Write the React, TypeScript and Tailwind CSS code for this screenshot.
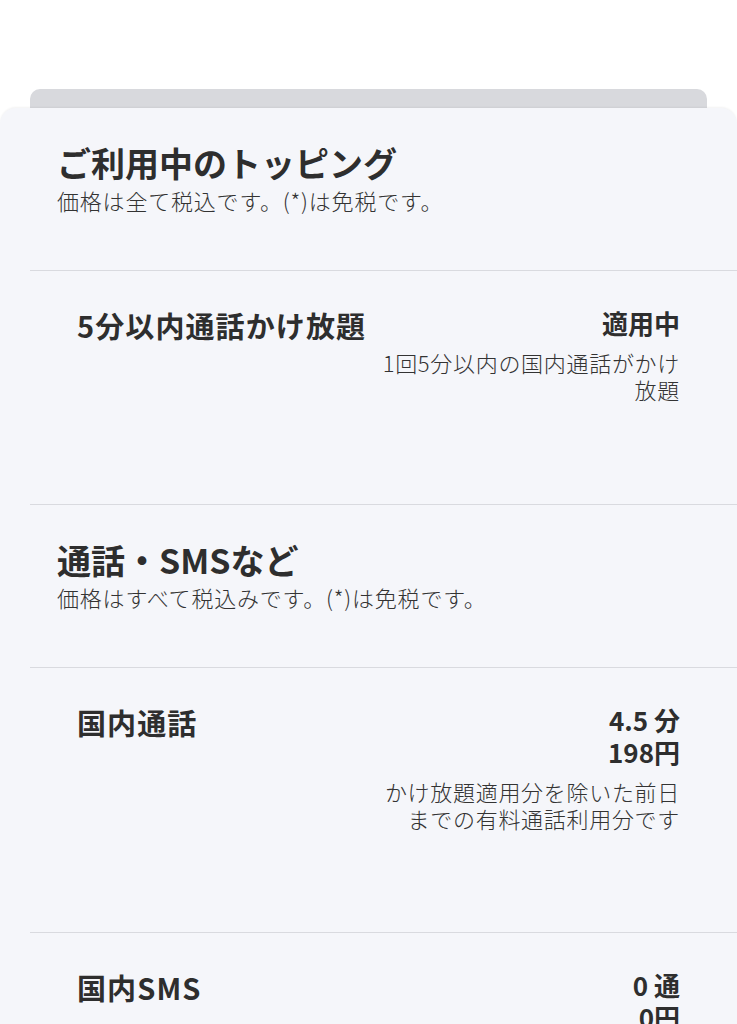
import React from "react";

const font = { fontFamily: '"Noto Sans CJK JP", "Noto Sans", sans-serif' };

function SectionHeader({ title, sub }: { title: string; sub: string }) {
  return (
    <div className="pl-[57px] pr-[57px] pt-[35px] pb-[56px]">
      <div className="text-[34px] leading-[40px] font-bold text-[#2e2e2e]">{title}</div>
      <div className="text-[22px] leading-[28px] font-light text-[#333] mt-[3px] whitespace-nowrap tracking-[0.8px]">{sub}</div>
    </div>
  );
}

function Divider() {
  return <div className="ml-[30px] h-px bg-[#d9dadf]" />;
}

function Row({ label, values, desc, pb }: { label: string; values: string[]; desc?: string[]; pb: string }) {
  return (
    <div className={`flex justify-between pl-[77px] pr-[57px] pt-[36px] ${pb}`}>
      <div className="text-[29px] leading-[36px] font-bold text-[#2e2e2e] whitespace-nowrap tracking-[1.1px]">{label}</div>
      <div className="flex flex-col items-end text-right">
        {values.map((v, i) => (
          <div key={i} className="text-[26px] leading-[32px] font-bold text-[#2e2e2e] whitespace-nowrap">{v}</div>
        ))}
        {desc && (
          <div className="mt-[10px] text-[22px] leading-[27px] font-light text-[#333] whitespace-nowrap tracking-[0.7px]">
            {desc.map((d, i) => (
              <div key={i}>{d}</div>
            ))}
          </div>
        )}
      </div>
    </div>
  );
}

export default function App() {
  return (
    <div className="min-h-screen bg-white pt-[89px] overflow-hidden" style={font}>
      <div className="mx-[30px] h-[20px] bg-[#d8d9dd] rounded-t-[10px]" />
      <div className="-mt-px bg-[#f5f6fa] rounded-t-[16px] min-h-[920px] shadow-[0_-1px_2px_rgba(0,0,0,0.05)]">
        <SectionHeader title="ご利用中のトッピング" sub="価格は全て税込です。(*)は免税です。" />
        <Divider />
        <Row
          label="5分以内通話かけ放題"
          values={["適用中"]}
          desc={["1回5分以内の国内通話がかけ", "放題"]}
          pb="pb-[101px]"
        />
        <Divider />
        <SectionHeader title="通話・SMSなど" sub="価格はすべて税込みです。(*)は免税です。" />
        <Divider />
        <Row
          label="国内通話"
          values={["4.5 分", "198円"]}
          desc={["かけ放題適用分を除いた前日", "までの有料通話利用分です"]}
          pb="pb-[100px]"
        />
        <Divider />
        <Row label="国内SMS" values={["0 通", "0円"]} pb="pb-[100px]" />
      </div>
    </div>
  );
}
